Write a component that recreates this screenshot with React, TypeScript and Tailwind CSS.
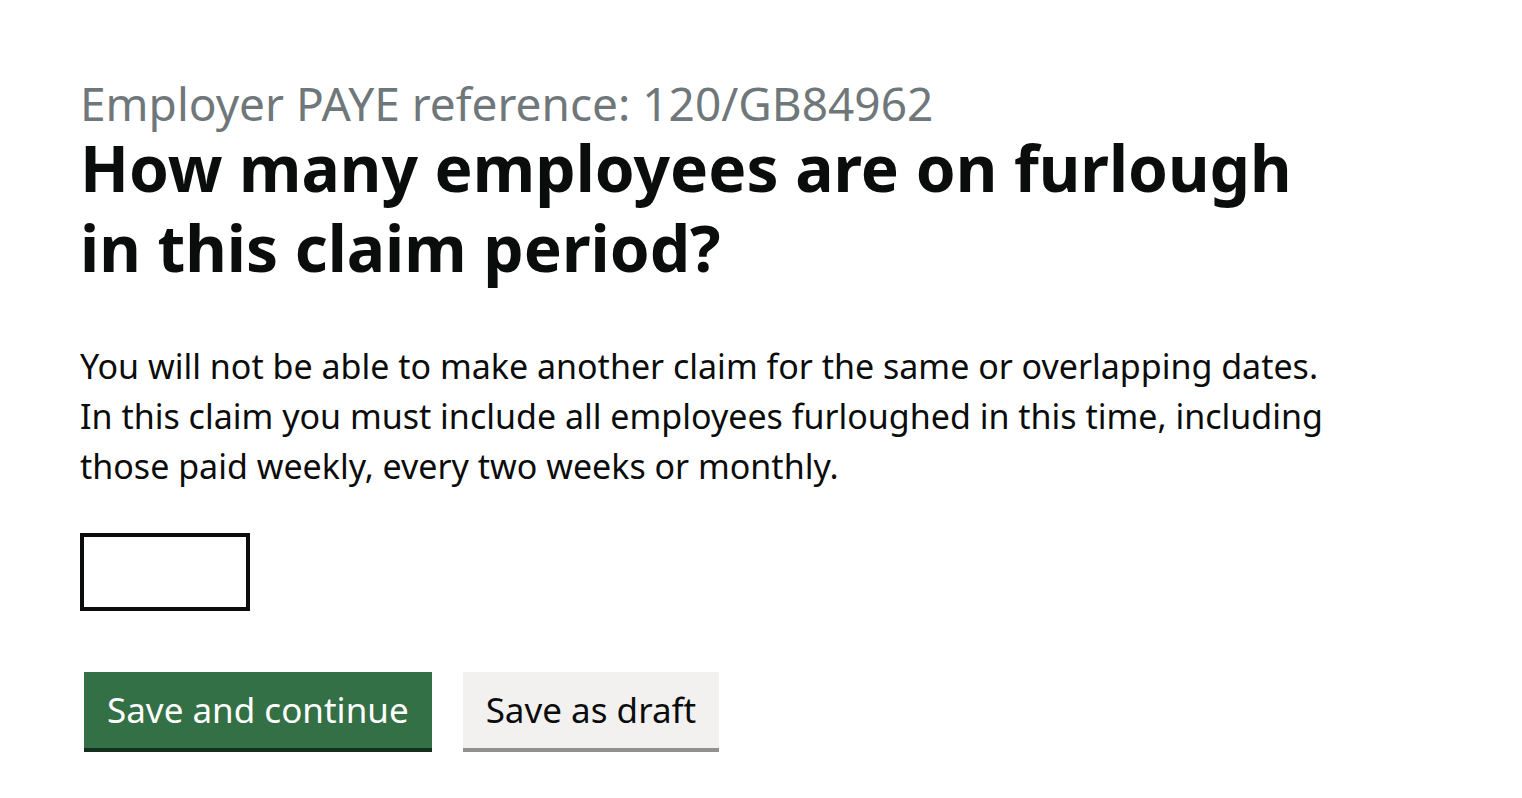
import React from "react";

const App: React.FunctionComponent = () => {
  return (
    <div
      className="min-h-screen bg-white px-[80px] pt-[78px] text-[#0b0c0c]"
      style={{ fontFamily: '"Noto Sans", Arial, sans-serif' }}
    >
      <span className="block text-[46px] leading-[50px] text-[#6f777b]">
        Employer PAYE reference: 120/GB84962
      </span>
      <h1 className="text-[64px] leading-[80px] font-bold">
        How many employees are on furlough
        <br />
        in this claim period?
      </h1>
      <div className="mt-[53px] text-[34px] leading-[50px]">
        <p>You will not be able to make another claim for the same or overlapping dates.</p>
        <p>
          In this claim you must include all employees furloughed in this time, including
          <br />
          those paid weekly, every two weeks or monthly.
        </p>
      </div>
      <input
        type="text"
        aria-label="Number of employees"
        className="mt-[42px] block h-[78px] w-[170px] border-4 border-[#0b0c0c] px-2 text-[34px] outline-none"
      />
      <div className="mt-[61px] flex items-start gap-[31px] pl-[4px]">
        <button className="h-[80px] bg-[#347045] px-[23px] pb-[4px] text-[35px] text-white shadow-[inset_0_-4px_0_#12301b]">
          Save and continue
        </button>
        <button className="h-[80px] bg-[#f2f1f0] px-[23px] pb-[4px] text-[35px] text-[#0b0c0c] shadow-[inset_0_-4px_0_#929191]">
          Save as draft
        </button>
      </div>
    </div>
  );
};

export default App;
